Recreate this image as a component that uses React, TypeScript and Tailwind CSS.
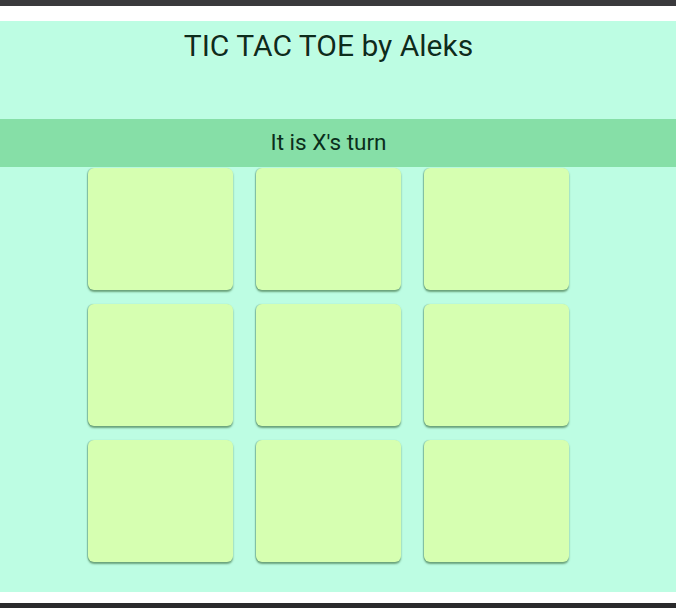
export default function App() {
  const cells = Array.from({ length: 9 });
  return (
    <div className="w-[676px] h-[608px] bg-white flex flex-col" style={{ fontFamily: 'Roboto, "Liberation Sans", sans-serif' }}>
      <div className="h-[6px] bg-[#3a3a3c] shrink-0" />
      <div className="h-[15px] bg-white shrink-0" />
      <div className="h-[571px] bg-[#bdfde3] shrink-0">
        <div className="h-[98px] w-[657px] flex justify-center">
          <h1 className="text-[30px] leading-[34px] mt-[8px] text-[#0b2e1c] [text-shadow:0_0_1px_#ffffff]">TIC TAC TOE by Aleks</h1>
        </div>
        <div className="h-[48px] bg-[#86dfa7]">
          <div className="w-[657px] h-full flex items-center justify-center">
            <span className="text-[22.5px] text-[#0b2e1c]">It is X's turn</span>
          </div>
        </div>
        <div className="w-[657px]">
          <div className="grid grid-cols-[145px_145px_145px] gap-x-[23px] gap-y-[14px] justify-center pt-[1px]">
            {cells.map((_, i) => (
              <div key={i} className="h-[122px] rounded-[6px] bg-[#d6ffb1] shadow-[0_2px_2px_rgba(40,90,40,0.55),-1px_0_1px_rgba(60,120,100,0.35)]" />
            ))}
          </div>
        </div>
      </div>
      <div className="h-[11px] bg-white shrink-0" />
      <div className="flex-1 bg-[#2a2a2c]" />
    </div>
  );
}
